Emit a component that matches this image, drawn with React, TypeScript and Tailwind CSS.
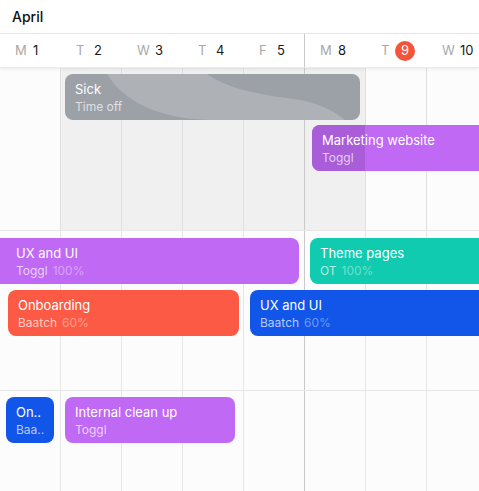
import React from 'react';

type Ev = {
  title: string;
  sub: string;
  pct?: string;
  cls: string;
  color: string;
};

const days = [
  { d: 'M', n: '1' },
  { d: 'T', n: '2' },
  { d: 'W', n: '3' },
  { d: 'T', n: '4' },
  { d: 'F', n: '5' },
  { d: 'M', n: '8' },
  { d: 'T', n: '9', today: true },
  { d: 'W', n: '10' },
];

const EventCard: React.FC<{ ev: Ev; children?: React.ReactNode }> = ({ ev, children }) => (
  <div className={`absolute h-[46px] overflow-hidden pt-[7px] ${ev.color} ${ev.cls}`}>
    {children}
    <div className="relative whitespace-nowrap">
      <div className="text-[13px] leading-[17px] text-white">{ev.title}</div>
      <div className="text-[12px] leading-[17px] text-white/70">
        {ev.sub}
        {ev.pct && <span className="ml-[5px] text-white/40">{ev.pct}</span>}
      </div>
    </div>
  </div>
);

// column guide lines; the 5th closes the week and is darker
const ColumnLines: React.FC<{ light: string }> = ({ light }) => (
  <div className="absolute inset-0 flex pointer-events-none">
    {days.map((_, i) => (
      <div
        key={i}
        className={`w-[61px] flex-shrink-0 border-r ${i === 4 ? 'border-[#c9c9c9]' : light}`}
      />
    ))}
  </div>
);

const App: React.FC = () => {
  return (
    <div
      className="relative w-[479px] h-[491px] overflow-hidden bg-[#fcfcfc] flex flex-col"
      style={{ fontFamily: 'Inter, "Noto Sans", sans-serif' }}
    >
      {/* Month bar */}
      <div className="h-[34px] flex-shrink-0 flex items-center px-3 bg-white border-b border-[#e8e8e8]">
        <span className="text-[14px] font-medium text-[#111]">April</span>
      </div>

      {/* Day header */}
      <div className="relative z-10 h-[34px] flex-shrink-0 flex bg-white shadow-[0_1px_3px_rgba(0,0,0,0.08)] border-b border-[#ececec]">
        {days.map((day, i) => (
          <div
            key={i}
            className={`w-[61px] flex-shrink-0 flex items-center pl-[15px] text-[13px] ${i === 4 ? 'border-r border-[#c9c9c9]' : ''}`}
          >
            <span className="w-[18px] text-[#a8a8a8]">{day.d}</span>
            {day.today ? (
              <span className="-ml-1 w-5 h-5 rounded-full bg-[#f4533c] text-white flex items-center justify-center">
                {day.n}
              </span>
            ) : (
              <span className="text-[#1a1a1a]">{day.n}</span>
            )}
          </div>
        ))}
      </div>

      {/* Body */}
      <div className="relative flex-1 flex flex-col">
        <ColumnLines light="border-[#e6e6e6]" />

        {/* Row 1 */}
        <div className="relative h-[163px] flex-shrink-0 border-b border-[#e6e6e6]">
          <div className="absolute left-[61px] top-0 bottom-0 w-[304px] bg-[#f0f0f0]" />
          <ColumnLines light="border-[#e0e0e0]" />
          <EventCard
            ev={{ title: 'Sick', sub: 'Time off', cls: 'left-[65px] top-[6px] w-[295px] rounded-lg pl-[10px]', color: 'bg-[#9ca0a7]' }}
          >
            <svg className="absolute inset-0" width="295" height="46" viewBox="0 0 295 46">
              <path d="M42 0 C58 26 92 46 150 46 L280 46 C268 36 250 27 222 24 C190 20 162 14 142 0 Z" fill="#aeb1b6" />
            </svg>
          </EventCard>
          <EventCard
            ev={{ title: 'Marketing website', sub: 'Toggl', cls: 'left-[312px] top-[57px] w-[190px] rounded-l-lg pl-[10px]', color: 'bg-[#bf69f4]' }}
          >
            <div className="absolute left-0 top-0 bottom-0 w-[53px] bg-[#a95dd9]" />
          </EventCard>
        </div>

        {/* Row 2 */}
        <div className="relative h-[160px] flex-shrink-0 border-b border-[#e6e6e6]">
          <EventCard
            ev={{ title: 'UX and UI', sub: 'Toggl', pct: '100%', cls: 'left-0 top-[7px] w-[299px] rounded-r-lg pl-4', color: 'bg-[#bf69f4]' }}
          />
          <EventCard
            ev={{ title: 'Theme pages', sub: 'OT', pct: '100%', cls: 'left-[310px] top-[7px] w-[190px] rounded-l-lg pl-[10px]', color: 'bg-[#10cbb0]' }}
          />
          <EventCard
            ev={{ title: 'Onboarding', sub: 'Baatch', pct: '60%', cls: 'left-[8px] top-[59px] w-[231px] rounded-lg pl-[10px]', color: 'bg-[#fc5a44]' }}
          />
          <EventCard
            ev={{ title: 'UX and UI', sub: 'Baatch', pct: '60%', cls: 'left-[250px] top-[59px] w-[250px] rounded-l-lg pl-[10px]', color: 'bg-[#1155e9]' }}
          />
        </div>

        {/* Row 3 */}
        <div className="relative flex-1">
          <EventCard
            ev={{ title: 'On..', sub: 'Baa..', cls: 'left-[6px] top-[6px] w-[48px] rounded-lg pl-[10px]', color: 'bg-[#1155e9]' }}
          />
          <EventCard
            ev={{ title: 'Internal clean up', sub: 'Toggl', cls: 'left-[65px] top-[6px] w-[170px] rounded-lg pl-[10px]', color: 'bg-[#bf69f4]' }}
          />
        </div>
      </div>
    </div>
  );
};

export default App;
